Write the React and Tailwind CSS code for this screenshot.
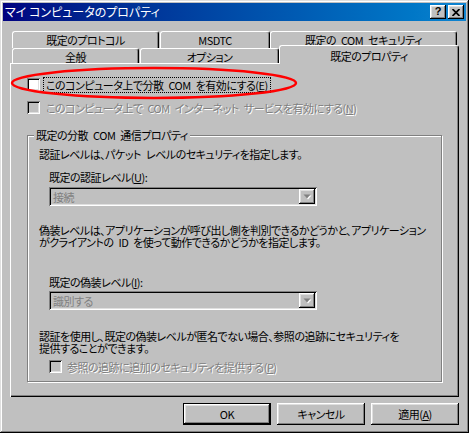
import React from 'react';

const raised = 'shadow-[inset_-1px_-1px_#000,inset_1px_1px_#fff,inset_-2px_-2px_#808080,inset_2px_2px_#dfdfdf]';
const sunken = 'shadow-[inset_1px_1px_#808080,inset_-1px_-1px_#fff,inset_2px_2px_#000,inset_-2px_-2px_#dfdfdf]';
const disabledText = 'text-[#808080] [text-shadow:1px_1px_0_#fff]';

const CheckBox = ({ disabled }) => (
    <span className={`block w-[13px] h-[13px] shrink-0 ${disabled ? 'bg-[#c0c0c0]' : 'bg-white'} ${sunken}`} />
);

const Tab = ({ children, className }) => (
    <div className={`flex items-center justify-center whitespace-nowrap border-t border-l border-white border-r border-r-black rounded-t-[3px] shadow-[inset_-1px_0_#808080] ${className}`}>
        {children}
    </div>
);

const Combo = ({ value, className }) => (
    <div className={`ml-[10px] w-[268px] h-[19px] flex items-center justify-between bg-[#c0c0c0] pl-[4px] pr-[2px] ${sunken} ${className}`}>
        <span className="text-[#808080]">{value}</span>
        <div className={`w-[16px] h-[15px] flex items-center justify-center ${raised}`}>
            <svg width="9" height="6" viewBox="0 0 9 6">
                <polygon points="1.5,1.5 8.5,1.5 5,5.5" fill="#fff" />
                <polygon points="0.5,0.5 7.5,0.5 4,4.5" fill="#808080" />
            </svg>
        </div>
    </div>
);

const Button = ({ children, isDefault }) => (
    <div className={`w-[88px] h-[22px] flex items-center justify-center ${isDefault ? 'border border-black' : ''}`}>
        <div className={`w-full h-full flex items-center justify-center ${raised}`}>{children}</div>
    </div>
);

export default function App() {
    return (
        <div className={`w-[469px] h-[433px] bg-[#c0c0c0] p-[3px] text-[11px] leading-[12px] tracking-[-0.5px] [word-spacing:3px] text-black font-['Noto_Sans_CJK_JP','Noto_Sans',sans-serif] [font-feature-settings:'palt'] shadow-[inset_-1px_-1px_#000,inset_1px_1px_#dfdfdf,inset_-2px_-2px_#808080,inset_2px_2px_#fff]`}>
            {/* Title bar */}
            <div className="h-[18px] bg-linear-to-r from-[#000080] to-[#1084d0] flex items-center justify-between pl-[2px] pr-[2px]">
                <span className="text-white text-[12px] tracking-normal [word-spacing:0px]">マイ コンピュータのプロパティ</span>
                <div className="flex gap-[2px]">
                    <div className={`w-[16px] h-[14px] bg-[#c0c0c0] flex items-center justify-center ${raised}`}>
                        <span className="font-['Liberation_Sans',sans-serif] font-bold text-[11px] leading-[11px] tracking-normal pb-[1px]">?</span>
                    </div>
                    <div className={`w-[16px] h-[14px] bg-[#c0c0c0] flex items-center justify-center ${raised}`}>
                        <svg width="8" height="7" viewBox="0 0 8 7">
                            <path d="M0.5 0 L7.5 7 M7.5 0 L0.5 7" stroke="#000" strokeWidth="1.7" />
                        </svg>
                    </div>
                </div>
            </div>

            <div className="pl-[7px] pt-[10px]">
                {/* Back tab row */}
                <div className="flex h-[17px] pl-[2px]">
                    <Tab className="w-[147px] pb-[1px]">既定のプロトコル</Tab>
                    <Tab className="w-[110px] ml-[1px] pb-[1px]">MSDTC</Tab>
                    <Tab className="w-[187px] pb-[1px]">既定の COM セキュリティ</Tab>
                </div>
                {/* Front tab row */}
                <div className="flex h-[15px] items-end pl-[2px] relative z-10">
                    <Tab className="w-[127px] h-full pt-[2px]">全般</Tab>
                    <Tab className="w-[139px] ml-[1px] h-full pt-[2px]">オプション</Tab>
                    <Tab className="w-[180px] h-[19px] -mb-px bg-[#c0c0c0] pt-[2px]">既定のプロパティ</Tab>
                </div>

                {/* Tab page */}
                <div className="relative w-[449px] h-[334px] shadow-[inset_1px_1px_#fff,inset_-1px_-1px_#000,inset_-2px_-2px_#808080] pl-[17px] pt-[15px]">
                    <div className="flex items-center h-[13px]">
                        <CheckBox />
                        <span className="ml-[3px] px-[2px] py-px border border-dotted border-black whitespace-nowrap">
                            このコンピュータ上で分散 COM を有効にする(<span className="underline">E</span>)
                        </span>
                    </div>
                    <div className="flex items-center h-[13px] mt-[10px]">
                        <CheckBox disabled />
                        <span className={`ml-[6px] whitespace-nowrap ${disabledText}`}>
                            このコンピュータ上で COM インターネット サービスを有効にする(<span className="underline">N</span>)
                        </span>
                    </div>

                    {/* Group box */}
                    <div className="relative mt-[21px] w-[415px] h-[247px] border border-[#808080] shadow-[1px_1px_0_#fff,inset_1px_1px_0_#fff] pl-[11px] pt-[12px]">
                        <span className="absolute left-[6px] -top-[7px] px-[2px] bg-[#c0c0c0] whitespace-nowrap">既定の分散 COM 通信プロパティ</span>
                        <p className="whitespace-nowrap">認証レベルは、パケット レベルのセキュリティを指定します。</p>
                        <p className="ml-[10px] mt-[11px] whitespace-nowrap">既定の認証レベル(<span className="underline">U</span>):</p>
                        <Combo value="接続" className="mt-[4px]" />
                        <p className="mt-[18px] whitespace-nowrap">
                            偽装レベルは、アプリケーションが呼び出し側を判別できるかどうかと、アプリケーション
                            <br />
                            がクライアントの ID を使って動作できるかどうかを指定します。
                        </p>
                        <p className="ml-[10px] mt-[28px] whitespace-nowrap">既定の偽装レベル(<span className="underline">I</span>):</p>
                        <Combo value="識別する" className="mt-[3px]" />
                        <p className="mt-[20px] whitespace-nowrap">
                            認証を使用し、既定の偽装レベルが匿名でない場合、参照の追跡にセキュリティを
                            <br />
                            提供することができます。
                        </p>
                        <div className="flex items-center h-[13px] ml-[10px] mt-[6px]">
                            <CheckBox disabled />
                            <span className={`ml-[5px] whitespace-nowrap ${disabledText}`}>
                                参照の追跡に追加のセキュリティを提供する(<span className="underline">P</span>)
                            </span>
                        </div>
                    </div>

                    {/* Red annotation ellipse */}
                    <svg className="absolute left-0 top-[3px]" width="290" height="34" viewBox="0 0 290 34">
                        <ellipse cx="144" cy="17" rx="142" ry="15" fill="none" stroke="#ff0000" strokeWidth="2.5" />
                    </svg>
                </div>

                {/* Dialog buttons */}
                <div className="flex justify-end gap-[6px] w-[449px] mt-[6px]">
                    <Button isDefault>OK</Button>
                    <Button>キャンセル</Button>
                    <Button>適用(<span className="underline">A</span>)</Button>
                </div>
            </div>
        </div>
    );
}
